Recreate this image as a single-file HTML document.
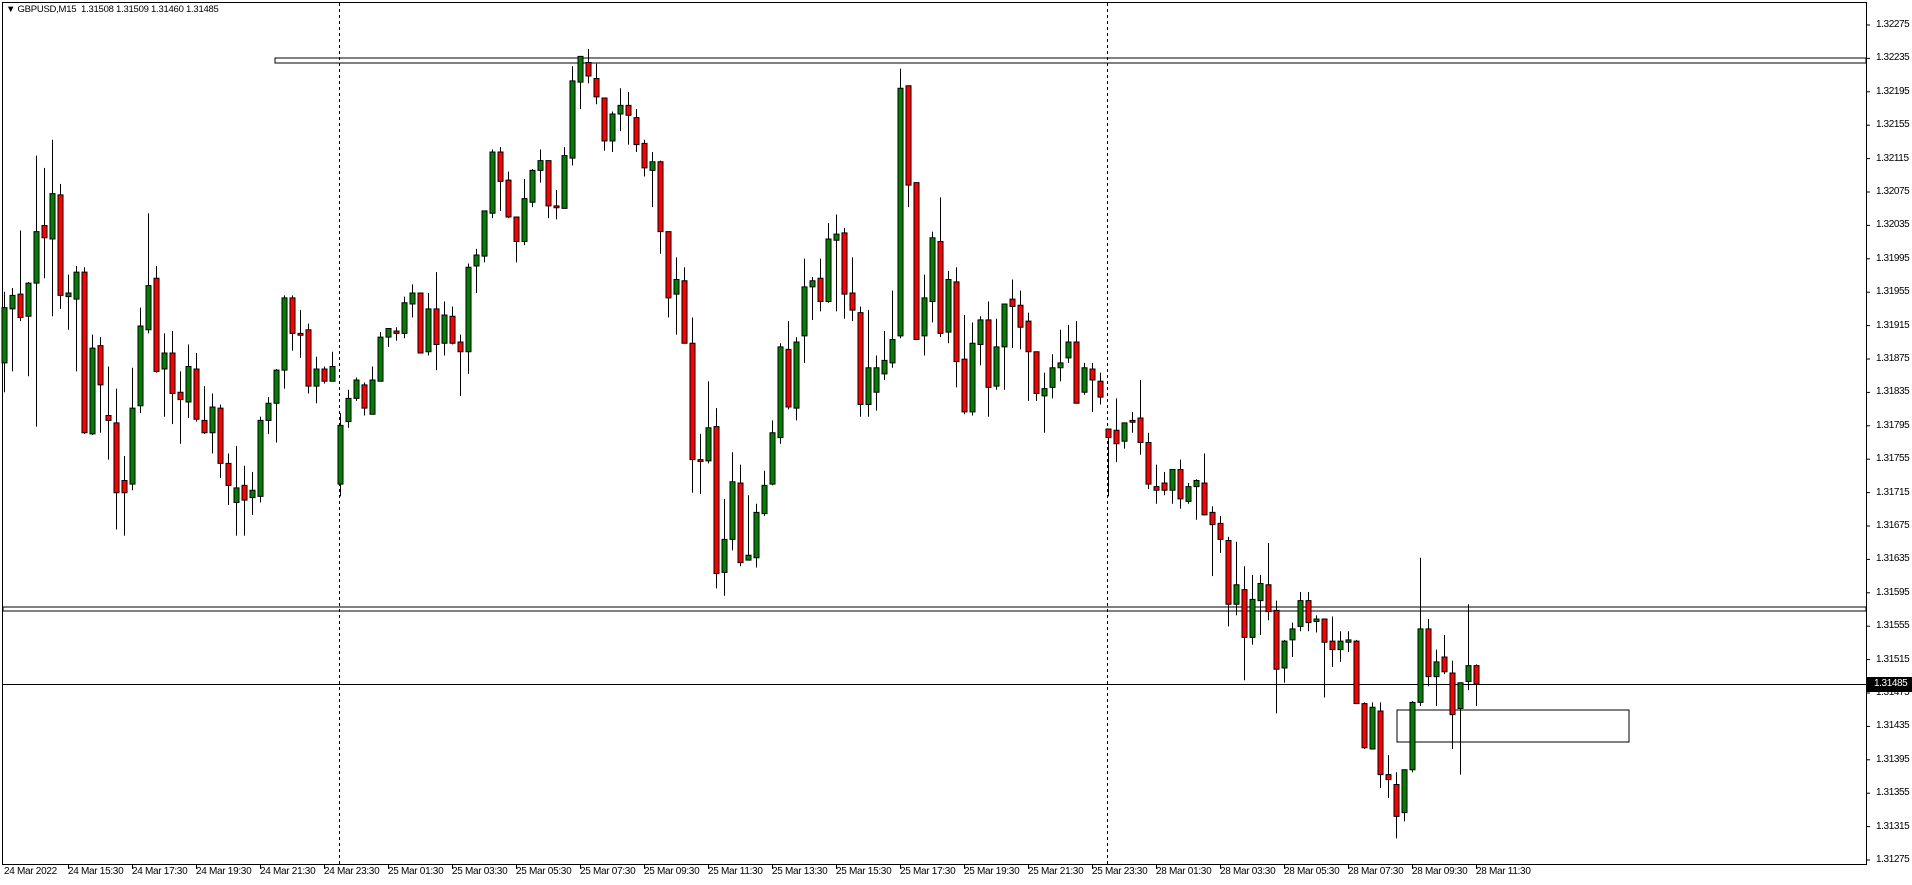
<!DOCTYPE html>
<html><head><meta charset="utf-8"><style>
html,body{margin:0;padding:0;background:#fff;}
body{width:1912px;height:885px;position:relative;overflow:hidden;font-family:"Liberation Sans",sans-serif;color:#000;}
.pl{position:absolute;left:1876px;font-size:10px;letter-spacing:-0.4px;line-height:12px;}
.tl{position:absolute;top:866px;font-size:10px;letter-spacing:-0.3px;line-height:12px;white-space:nowrap;}
#title{position:absolute;left:6px;top:4px;font-size:9.5px;letter-spacing:-0.25px;white-space:pre;}
</style></head><body>
<svg width="1912" height="885" style="position:absolute;left:0;top:0" viewBox="0 0 1912 885">
<rect x="2.5" y="2.5" width="1864" height="862" fill="none" stroke="#000" stroke-width="1"/>
<line x1="339.5" y1="3" x2="339.5" y2="864" stroke="#000" stroke-dasharray="3,3"/>
<line x1="1107.5" y1="3" x2="1107.5" y2="864" stroke="#000" stroke-dasharray="3,3"/>
<rect x="275" y="58" width="1591" height="5" fill="none" stroke="#000" stroke-width="2.2"/>
<rect x="3" y="607" width="1863" height="4" fill="none" stroke="#000" stroke-width="2.2"/>
<line x1="3" y1="684.5" x2="1866" y2="684.5" stroke="#778899" stroke-width="1"/>
<rect x="1397" y="710" width="232" height="32" fill="none" stroke="#000" stroke-width="3"/>
<g stroke="#000" stroke-width="1">
<line x1="1866" x2="1870" y1="25" y2="25"/><line x1="1866" x2="1870" y1="58.4" y2="58.4"/><line x1="1866" x2="1870" y1="91.8" y2="91.8"/><line x1="1866" x2="1870" y1="125.2" y2="125.2"/><line x1="1866" x2="1870" y1="158.6" y2="158.6"/><line x1="1866" x2="1870" y1="192" y2="192"/><line x1="1866" x2="1870" y1="225.4" y2="225.4"/><line x1="1866" x2="1870" y1="258.8" y2="258.8"/><line x1="1866" x2="1870" y1="292.2" y2="292.2"/><line x1="1866" x2="1870" y1="325.6" y2="325.6"/><line x1="1866" x2="1870" y1="359" y2="359"/><line x1="1866" x2="1870" y1="392.4" y2="392.4"/><line x1="1866" x2="1870" y1="425.8" y2="425.8"/><line x1="1866" x2="1870" y1="459.2" y2="459.2"/><line x1="1866" x2="1870" y1="492.6" y2="492.6"/><line x1="1866" x2="1870" y1="526" y2="526"/><line x1="1866" x2="1870" y1="559.4" y2="559.4"/><line x1="1866" x2="1870" y1="592.8" y2="592.8"/><line x1="1866" x2="1870" y1="626.2" y2="626.2"/><line x1="1866" x2="1870" y1="659.6" y2="659.6"/><line x1="1866" x2="1870" y1="693" y2="693"/><line x1="1866" x2="1870" y1="726.4" y2="726.4"/><line x1="1866" x2="1870" y1="759.8" y2="759.8"/><line x1="1866" x2="1870" y1="793.2" y2="793.2"/><line x1="1866" x2="1870" y1="826.6" y2="826.6"/><line x1="1866" x2="1870" y1="860" y2="860"/>
</g>
<g stroke="#000" stroke-width="1">
<line x1="68.5" x2="68.5" y1="864" y2="869"/><line x1="132.5" x2="132.5" y1="864" y2="869"/><line x1="196.5" x2="196.5" y1="864" y2="869"/><line x1="260.5" x2="260.5" y1="864" y2="869"/><line x1="324.5" x2="324.5" y1="864" y2="869"/><line x1="388.5" x2="388.5" y1="864" y2="869"/><line x1="452.5" x2="452.5" y1="864" y2="869"/><line x1="516.5" x2="516.5" y1="864" y2="869"/><line x1="580.5" x2="580.5" y1="864" y2="869"/><line x1="644.5" x2="644.5" y1="864" y2="869"/><line x1="708.5" x2="708.5" y1="864" y2="869"/><line x1="772.5" x2="772.5" y1="864" y2="869"/><line x1="836.5" x2="836.5" y1="864" y2="869"/><line x1="900.5" x2="900.5" y1="864" y2="869"/><line x1="964.5" x2="964.5" y1="864" y2="869"/><line x1="1028.5" x2="1028.5" y1="864" y2="869"/><line x1="1092.5" x2="1092.5" y1="864" y2="869"/><line x1="1156.5" x2="1156.5" y1="864" y2="869"/><line x1="1220.5" x2="1220.5" y1="864" y2="869"/><line x1="1284.5" x2="1284.5" y1="864" y2="869"/><line x1="1348.5" x2="1348.5" y1="864" y2="869"/><line x1="1412.5" x2="1412.5" y1="864" y2="869"/><line x1="1476.5" x2="1476.5" y1="864" y2="869"/>
</g>
</svg>
<svg id="c" width="1912" height="885" style="position:absolute;left:0;top:0" viewBox="0 0 1912 722" preserveAspectRatio="none">
<style>line{stroke:#000;stroke-width:1;vector-effect:non-scaling-stroke}rect{stroke:#000;stroke-width:1;vector-effect:non-scaling-stroke}.g{fill:#008000}.r{fill:#ff0000}</style>
<line x1="4.5" x2="4.5" y1="238" y2="320"/><rect class="g" x="2" width="5" y="251" height="45"/>
<line x1="12.5" x2="12.5" y1="235" y2="303"/><rect class="g" x="10" width="5" y="241" height="11"/>
<line x1="20.5" x2="20.5" y1="188" y2="262"/><rect class="r" x="18" width="5" y="240" height="19"/>
<line x1="28.5" x2="28.5" y1="230" y2="307"/><rect class="g" x="26" width="5" y="231" height="27"/>
<line x1="36.5" x2="36.5" y1="127" y2="348"/><rect class="g" x="34" width="5" y="189" height="42"/>
<line x1="44.5" x2="44.5" y1="137" y2="227"/><rect class="r" x="42" width="5" y="184" height="10"/>
<line x1="52.5" x2="52.5" y1="114" y2="258"/><rect class="g" x="50" width="5" y="158" height="37"/>
<line x1="60.5" x2="60.5" y1="150" y2="252"/><rect class="r" x="58" width="5" y="159" height="82"/>
<line x1="68.5" x2="68.5" y1="224" y2="269"/><rect class="g" x="66" width="5" y="239" height="3"/>
<line x1="76.5" x2="76.5" y1="217" y2="303"/><rect class="g" x="74" width="5" y="222" height="22"/>
<line x1="84.5" x2="84.5" y1="218" y2="354"/><rect class="r" x="82" width="5" y="222" height="131"/>
<line x1="92.5" x2="92.5" y1="273" y2="355"/><rect class="g" x="90" width="5" y="284" height="70"/>
<line x1="100.5" x2="100.5" y1="275" y2="353"/><rect class="r" x="98" width="5" y="282" height="32"/>
<line x1="108.5" x2="108.5" y1="299" y2="375"/><rect class="r" x="106" width="5" y="339" height="4"/>
<line x1="116.5" x2="116.5" y1="317" y2="432"/><rect class="r" x="114" width="5" y="345" height="57"/>
<line x1="124.5" x2="124.5" y1="372" y2="437"/><rect class="r" x="122" width="5" y="392" height="10"/>
<line x1="132.5" x2="132.5" y1="300" y2="400"/><rect class="g" x="130" width="5" y="333" height="62"/>
<line x1="140.5" x2="140.5" y1="251" y2="337"/><rect class="g" x="138" width="5" y="266" height="65"/>
<line x1="148.5" x2="148.5" y1="174" y2="272"/><rect class="g" x="146" width="5" y="233" height="36"/>
<line x1="156.5" x2="156.5" y1="217" y2="304"/><rect class="r" x="154" width="5" y="227" height="76"/>
<line x1="164.5" x2="164.5" y1="272" y2="340"/><rect class="g" x="162" width="5" y="288" height="13"/>
<line x1="172.5" x2="172.5" y1="270" y2="346"/><rect class="r" x="170" width="5" y="288" height="33"/>
<line x1="180.5" x2="180.5" y1="303" y2="362"/><rect class="r" x="178" width="5" y="320" height="6"/>
<line x1="188.5" x2="188.5" y1="281" y2="341"/><rect class="g" x="186" width="5" y="299" height="29"/>
<line x1="196.5" x2="196.5" y1="288" y2="344"/><rect class="r" x="194" width="5" y="301" height="41"/>
<line x1="204.5" x2="204.5" y1="315" y2="354"/><rect class="r" x="202" width="5" y="343" height="10"/>
<line x1="212.5" x2="212.5" y1="321" y2="370"/><rect class="g" x="210" width="5" y="332" height="21"/>
<line x1="220.5" x2="220.5" y1="330" y2="390"/><rect class="r" x="218" width="5" y="333" height="45"/>
<line x1="228.5" x2="228.5" y1="370" y2="412"/><rect class="r" x="226" width="5" y="378" height="18"/>
<line x1="236.5" x2="236.5" y1="364" y2="437"/><rect class="g" x="234" width="5" y="398" height="12"/>
<line x1="244.5" x2="244.5" y1="380" y2="437"/><rect class="r" x="242" width="5" y="396" height="12"/>
<line x1="252.5" x2="252.5" y1="385" y2="420"/><rect class="g" x="250" width="5" y="400" height="6"/>
<line x1="260.5" x2="260.5" y1="340" y2="410"/><rect class="g" x="258" width="5" y="343" height="62"/>
<line x1="268.5" x2="268.5" y1="324" y2="354"/><rect class="g" x="266" width="5" y="329" height="14"/>
<line x1="276.5" x2="276.5" y1="301" y2="361"/><rect class="g" x="274" width="5" y="302" height="27"/>
<line x1="284.5" x2="284.5" y1="241" y2="317"/><rect class="g" x="282" width="5" y="243" height="59"/>
<line x1="292.5" x2="292.5" y1="241" y2="286"/><rect class="r" x="290" width="5" y="243" height="29"/>
<line x1="300.5" x2="300.5" y1="253" y2="292"/><rect class="r" x="298" width="5" y="272" height="1.5"/>
<line x1="308.5" x2="308.5" y1="264" y2="321"/><rect class="r" x="306" width="5" y="269" height="46"/>
<line x1="316.5" x2="316.5" y1="291" y2="329"/><rect class="g" x="314" width="5" y="301" height="14"/>
<line x1="324.5" x2="324.5" y1="299" y2="313"/><rect class="r" x="322" width="5" y="301" height="10"/>
<line x1="332.5" x2="332.5" y1="287" y2="311"/><rect class="g" x="330" width="5" y="299" height="12"/>
<line x1="340.5" x2="340.5" y1="337" y2="405"/><rect class="g" x="338" width="5" y="347" height="48"/>
<line x1="348.5" x2="348.5" y1="318" y2="349"/><rect class="g" x="346" width="5" y="325" height="19"/>
<line x1="356.5" x2="356.5" y1="308" y2="327"/><rect class="g" x="354" width="5" y="310" height="15"/>
<line x1="364.5" x2="364.5" y1="312" y2="339"/><rect class="r" x="362" width="5" y="314" height="19"/>
<line x1="372.5" x2="372.5" y1="299" y2="338"/><rect class="g" x="370" width="5" y="310" height="28"/>
<line x1="380.5" x2="380.5" y1="271" y2="311"/><rect class="g" x="378" width="5" y="275" height="36"/>
<line x1="388.5" x2="388.5" y1="268" y2="283"/><rect class="g" x="386" width="5" y="268" height="7"/>
<line x1="396.5" x2="396.5" y1="267" y2="278"/><rect class="r" x="394" width="5" y="270" height="2"/>
<line x1="404.5" x2="404.5" y1="242" y2="276"/><rect class="g" x="402" width="5" y="247" height="25"/>
<line x1="412.5" x2="412.5" y1="232" y2="259"/><rect class="g" x="410" width="5" y="239" height="9"/>
<line x1="420.5" x2="420.5" y1="239" y2="288"/><rect class="r" x="418" width="5" y="239" height="49"/>
<line x1="428.5" x2="428.5" y1="239" y2="290"/><rect class="g" x="426" width="5" y="252" height="35"/>
<line x1="436.5" x2="436.5" y1="222" y2="302"/><rect class="r" x="434" width="5" y="252" height="29"/>
<line x1="444.5" x2="444.5" y1="246" y2="290"/><rect class="g" x="442" width="5" y="257" height="23"/>
<line x1="452.5" x2="452.5" y1="250" y2="281"/><rect class="r" x="450" width="5" y="258" height="22"/>
<line x1="460.5" x2="460.5" y1="273" y2="323"/><rect class="r" x="458" width="5" y="279" height="8"/>
<line x1="468.5" x2="468.5" y1="215" y2="305"/><rect class="g" x="466" width="5" y="218" height="69"/>
<line x1="476.5" x2="476.5" y1="203" y2="239"/><rect class="g" x="474" width="5" y="208" height="9"/>
<line x1="484.5" x2="484.5" y1="172" y2="214"/><rect class="g" x="482" width="5" y="172" height="37"/>
<line x1="492.5" x2="492.5" y1="122" y2="178"/><rect class="g" x="490" width="5" y="124" height="50"/>
<line x1="500.5" x2="500.5" y1="120" y2="172"/><rect class="r" x="498" width="5" y="124" height="24"/>
<line x1="508.5" x2="508.5" y1="140" y2="178"/><rect class="r" x="506" width="5" y="147" height="30"/>
<line x1="516.5" x2="516.5" y1="177" y2="214"/><rect class="r" x="514" width="5" y="177" height="20"/>
<line x1="524.5" x2="524.5" y1="146" y2="200"/><rect class="g" x="522" width="5" y="162" height="35"/>
<line x1="532.5" x2="532.5" y1="138" y2="169"/><rect class="g" x="530" width="5" y="139" height="26"/>
<line x1="540.5" x2="540.5" y1="122" y2="149"/><rect class="g" x="538" width="5" y="131" height="8"/>
<line x1="548.5" x2="548.5" y1="131" y2="178"/><rect class="r" x="546" width="5" y="131" height="37"/>
<line x1="556.5" x2="556.5" y1="155" y2="179"/><rect class="r" x="554" width="5" y="168" height="1.5"/>
<line x1="564.5" x2="564.5" y1="120" y2="170"/><rect class="g" x="562" width="5" y="127" height="43"/>
<line x1="572.5" x2="572.5" y1="54" y2="135"/><rect class="g" x="570" width="5" y="66" height="63"/>
<line x1="580.5" x2="580.5" y1="46" y2="89"/><rect class="g" x="578" width="5" y="46" height="21"/>
<line x1="588.5" x2="588.5" y1="40" y2="68"/><rect class="r" x="586" width="5" y="51" height="11"/>
<line x1="596.5" x2="596.5" y1="52" y2="85"/><rect class="r" x="594" width="5" y="64" height="15"/>
<line x1="604.5" x2="604.5" y1="80" y2="123"/><rect class="r" x="602" width="5" y="80" height="35"/>
<line x1="612.5" x2="612.5" y1="91" y2="124"/><rect class="g" x="610" width="5" y="93" height="22"/>
<line x1="620.5" x2="620.5" y1="72" y2="107"/><rect class="g" x="618" width="5" y="86" height="7"/>
<line x1="628.5" x2="628.5" y1="75" y2="118"/><rect class="r" x="626" width="5" y="86" height="8"/>
<line x1="636.5" x2="636.5" y1="89" y2="124"/><rect class="r" x="634" width="5" y="96" height="22"/>
<line x1="644.5" x2="644.5" y1="114" y2="144"/><rect class="r" x="642" width="5" y="117" height="20"/>
<line x1="652.5" x2="652.5" y1="124" y2="169"/><rect class="g" x="650" width="5" y="132" height="7"/>
<line x1="660.5" x2="660.5" y1="131" y2="207"/><rect class="r" x="658" width="5" y="132" height="57"/>
<line x1="668.5" x2="668.5" y1="189" y2="259"/><rect class="r" x="666" width="5" y="189" height="54"/>
<line x1="676.5" x2="676.5" y1="210" y2="273"/><rect class="g" x="674" width="5" y="228" height="12"/>
<line x1="684.5" x2="684.5" y1="218" y2="280"/><rect class="r" x="682" width="5" y="229" height="51"/>
<line x1="692.5" x2="692.5" y1="259" y2="402"/><rect class="r" x="690" width="5" y="280" height="95"/>
<line x1="700.5" x2="700.5" y1="354" y2="403"/><rect class="r" x="698" width="5" y="375" height="1.5"/>
<line x1="708.5" x2="708.5" y1="311" y2="378"/><rect class="g" x="706" width="5" y="349" height="27"/>
<line x1="716.5" x2="716.5" y1="333" y2="480"/><rect class="r" x="714" width="5" y="348" height="120"/>
<line x1="724.5" x2="724.5" y1="407" y2="486"/><rect class="g" x="722" width="5" y="440" height="27"/>
<line x1="732.5" x2="732.5" y1="369" y2="449"/><rect class="g" x="730" width="5" y="393" height="47"/>
<line x1="740.5" x2="740.5" y1="379" y2="462"/><rect class="r" x="738" width="5" y="394" height="65"/>
<line x1="748.5" x2="748.5" y1="404" y2="457"/><rect class="g" x="746" width="5" y="453" height="4"/>
<line x1="756.5" x2="756.5" y1="411" y2="463"/><rect class="g" x="754" width="5" y="418" height="37"/>
<line x1="764.5" x2="764.5" y1="384" y2="421"/><rect class="g" x="762" width="5" y="396" height="23"/>
<line x1="772.5" x2="772.5" y1="343" y2="396"/><rect class="g" x="770" width="5" y="353" height="42"/>
<line x1="780.5" x2="780.5" y1="280" y2="362"/><rect class="g" x="778" width="5" y="283" height="74"/>
<line x1="788.5" x2="788.5" y1="262" y2="334"/><rect class="r" x="786" width="5" y="285" height="47"/>
<line x1="796.5" x2="796.5" y1="275" y2="343"/><rect class="g" x="794" width="5" y="279" height="54"/>
<line x1="804.5" x2="804.5" y1="211" y2="296"/><rect class="g" x="802" width="5" y="234" height="40"/>
<line x1="812.5" x2="812.5" y1="226" y2="261"/><rect class="g" x="810" width="5" y="229" height="5"/>
<line x1="820.5" x2="820.5" y1="211" y2="254"/><rect class="r" x="818" width="5" y="227" height="19"/>
<line x1="828.5" x2="828.5" y1="182" y2="247"/><rect class="g" x="826" width="5" y="195" height="51"/>
<line x1="836.5" x2="836.5" y1="175" y2="254"/><rect class="g" x="834" width="5" y="191" height="5"/>
<line x1="844.5" x2="844.5" y1="186" y2="260"/><rect class="r" x="842" width="5" y="190" height="50"/>
<line x1="852.5" x2="852.5" y1="210" y2="262"/><rect class="r" x="850" width="5" y="239" height="14"/>
<line x1="860.5" x2="860.5" y1="250" y2="340"/><rect class="r" x="858" width="5" y="255" height="75"/>
<line x1="868.5" x2="868.5" y1="253" y2="340"/><rect class="g" x="866" width="5" y="300" height="30"/>
<line x1="876.5" x2="876.5" y1="290" y2="335"/><rect class="g" x="874" width="5" y="300" height="20"/>
<line x1="884.5" x2="884.5" y1="270" y2="310"/><rect class="g" x="882" width="5" y="294" height="11"/>
<line x1="892.5" x2="892.5" y1="237" y2="300"/><rect class="g" x="890" width="5" y="277" height="19"/>
<line x1="900.5" x2="900.5" y1="56" y2="276"/><rect class="g" x="898" width="5" y="72" height="202"/>
<line x1="908.5" x2="908.5" y1="70" y2="169"/><rect class="r" x="906" width="5" y="70" height="81"/>
<line x1="916.5" x2="916.5" y1="149" y2="277"/><rect class="r" x="914" width="5" y="149" height="128"/>
<line x1="924.5" x2="924.5" y1="224" y2="290"/><rect class="g" x="922" width="5" y="243" height="31"/>
<line x1="932.5" x2="932.5" y1="189" y2="263"/><rect class="g" x="930" width="5" y="194" height="52"/>
<line x1="940.5" x2="940.5" y1="161" y2="275"/><rect class="r" x="938" width="5" y="197" height="75"/>
<line x1="948.5" x2="948.5" y1="221" y2="280"/><rect class="g" x="946" width="5" y="228" height="43"/>
<line x1="956.5" x2="956.5" y1="218" y2="316"/><rect class="r" x="954" width="5" y="230" height="65"/>
<line x1="964.5" x2="964.5" y1="257" y2="338"/><rect class="r" x="962" width="5" y="293" height="43"/>
<line x1="972.5" x2="972.5" y1="263" y2="339"/><rect class="g" x="970" width="5" y="280" height="56"/>
<line x1="980.5" x2="980.5" y1="258" y2="298"/><rect class="g" x="978" width="5" y="261" height="20"/>
<line x1="988.5" x2="988.5" y1="246" y2="340"/><rect class="r" x="986" width="5" y="261" height="55"/>
<line x1="996.5" x2="996.5" y1="260" y2="318"/><rect class="g" x="994" width="5" y="283" height="32"/>
<line x1="1004.5" x2="1004.5" y1="248" y2="318"/><rect class="g" x="1002" width="5" y="248" height="35"/>
<line x1="1012.5" x2="1012.5" y1="228" y2="284"/><rect class="r" x="1010" width="5" y="244" height="6"/>
<line x1="1020.5" x2="1020.5" y1="237" y2="285"/><rect class="r" x="1018" width="5" y="249" height="18"/>
<line x1="1028.5" x2="1028.5" y1="255" y2="327"/><rect class="r" x="1026" width="5" y="262" height="25"/>
<line x1="1036.5" x2="1036.5" y1="287" y2="327"/><rect class="r" x="1034" width="5" y="287" height="34"/>
<line x1="1044.5" x2="1044.5" y1="304" y2="353"/><rect class="g" x="1042" width="5" y="317" height="6"/>
<line x1="1052.5" x2="1052.5" y1="289" y2="325"/><rect class="g" x="1050" width="5" y="300" height="16"/>
<line x1="1060.5" x2="1060.5" y1="269" y2="311"/><rect class="g" x="1058" width="5" y="296" height="4"/>
<line x1="1068.5" x2="1068.5" y1="265" y2="296"/><rect class="g" x="1066" width="5" y="279" height="13"/>
<line x1="1076.5" x2="1076.5" y1="262" y2="329"/><rect class="r" x="1074" width="5" y="279" height="50"/>
<line x1="1084.5" x2="1084.5" y1="296" y2="322"/><rect class="g" x="1082" width="5" y="300" height="20"/>
<line x1="1092.5" x2="1092.5" y1="296" y2="336"/><rect class="r" x="1090" width="5" y="301" height="9"/>
<line x1="1100.5" x2="1100.5" y1="304" y2="330"/><rect class="r" x="1098" width="5" y="311" height="13"/>
<line x1="1108.5" x2="1108.5" y1="350" y2="405"/><rect class="r" x="1106" width="5" y="350" height="7"/>
<line x1="1116.5" x2="1116.5" y1="325" y2="377"/><rect class="r" x="1114" width="5" y="351" height="11"/>
<line x1="1124.5" x2="1124.5" y1="345" y2="366"/><rect class="g" x="1122" width="5" y="345" height="15"/>
<line x1="1132.5" x2="1132.5" y1="336" y2="353"/><rect class="r" x="1130" width="5" y="343" height="1.5"/>
<line x1="1140.5" x2="1140.5" y1="310" y2="371"/><rect class="r" x="1138" width="5" y="341" height="20"/>
<line x1="1148.5" x2="1148.5" y1="353" y2="399"/><rect class="r" x="1146" width="5" y="361" height="34"/>
<line x1="1156.5" x2="1156.5" y1="379" y2="411"/><rect class="r" x="1154" width="5" y="397" height="3"/>
<line x1="1164.5" x2="1164.5" y1="385" y2="404"/><rect class="r" x="1162" width="5" y="394" height="6"/>
<line x1="1172.5" x2="1172.5" y1="383" y2="411"/><rect class="g" x="1170" width="5" y="383" height="17"/>
<line x1="1180.5" x2="1180.5" y1="375" y2="415"/><rect class="r" x="1178" width="5" y="383" height="24"/>
<line x1="1188.5" x2="1188.5" y1="394" y2="411"/><rect class="g" x="1186" width="5" y="397" height="12"/>
<line x1="1196.5" x2="1196.5" y1="391" y2="424"/><rect class="g" x="1194" width="5" y="392" height="5"/>
<line x1="1204.5" x2="1204.5" y1="370" y2="420"/><rect class="r" x="1202" width="5" y="394" height="26"/>
<line x1="1212.5" x2="1212.5" y1="413" y2="470"/><rect class="r" x="1210" width="5" y="418" height="10"/>
<line x1="1220.5" x2="1220.5" y1="421" y2="451"/><rect class="r" x="1218" width="5" y="427" height="13"/>
<line x1="1228.5" x2="1228.5" y1="438" y2="511"/><rect class="r" x="1226" width="5" y="441" height="52"/>
<line x1="1236.5" x2="1236.5" y1="442" y2="502"/><rect class="g" x="1234" width="5" y="477" height="16"/>
<line x1="1244.5" x2="1244.5" y1="462" y2="555"/><rect class="r" x="1242" width="5" y="481" height="39"/>
<line x1="1252.5" x2="1252.5" y1="469" y2="526"/><rect class="g" x="1250" width="5" y="489" height="31"/>
<line x1="1260.5" x2="1260.5" y1="469" y2="518"/><rect class="g" x="1258" width="5" y="476" height="14"/>
<line x1="1268.5" x2="1268.5" y1="443" y2="506"/><rect class="r" x="1266" width="5" y="477" height="22"/>
<line x1="1276.5" x2="1276.5" y1="490" y2="582"/><rect class="r" x="1274" width="5" y="498" height="48"/>
<line x1="1284.5" x2="1284.5" y1="522" y2="557"/><rect class="g" x="1282" width="5" y="523" height="22"/>
<line x1="1292.5" x2="1292.5" y1="508" y2="536"/><rect class="g" x="1290" width="5" y="513" height="9"/>
<line x1="1300.5" x2="1300.5" y1="483" y2="515"/><rect class="g" x="1298" width="5" y="490" height="21"/>
<line x1="1308.5" x2="1308.5" y1="483" y2="515"/><rect class="r" x="1306" width="5" y="490" height="18"/>
<line x1="1316.5" x2="1316.5" y1="502" y2="516"/><rect class="g" x="1314" width="5" y="505" height="2"/>
<line x1="1324.5" x2="1324.5" y1="505" y2="569"/><rect class="r" x="1322" width="5" y="505" height="19"/>
<line x1="1332.5" x2="1332.5" y1="503" y2="544"/><rect class="r" x="1330" width="5" y="523" height="7"/>
<line x1="1340.5" x2="1340.5" y1="515" y2="540"/><rect class="g" x="1338" width="5" y="523" height="7"/>
<line x1="1348.5" x2="1348.5" y1="515" y2="532"/><rect class="g" x="1346" width="5" y="522" height="2"/>
<line x1="1356.5" x2="1356.5" y1="522" y2="574"/><rect class="r" x="1354" width="5" y="523" height="51"/>
<line x1="1364.5" x2="1364.5" y1="573" y2="611"/><rect class="r" x="1362" width="5" y="574" height="36"/>
<line x1="1372.5" x2="1372.5" y1="573" y2="611"/><rect class="g" x="1370" width="5" y="577" height="34"/>
<line x1="1380.5" x2="1380.5" y1="573" y2="643"/><rect class="r" x="1378" width="5" y="580" height="52"/>
<line x1="1388.5" x2="1388.5" y1="616" y2="651"/><rect class="r" x="1386" width="5" y="632" height="4"/>
<line x1="1396.5" x2="1396.5" y1="630" y2="684"/><rect class="r" x="1394" width="5" y="640" height="26"/>
<line x1="1404.5" x2="1404.5" y1="628" y2="670"/><rect class="g" x="1402" width="5" y="628" height="35"/>
<line x1="1412.5" x2="1412.5" y1="572" y2="630"/><rect class="g" x="1410" width="5" y="573" height="55"/>
<line x1="1420.5" x2="1420.5" y1="455" y2="576"/><rect class="g" x="1418" width="5" y="513" height="60"/>
<line x1="1428.5" x2="1428.5" y1="505" y2="560"/><rect class="r" x="1426" width="5" y="513" height="39"/>
<line x1="1436.5" x2="1436.5" y1="530" y2="576"/><rect class="g" x="1434" width="5" y="540" height="12"/>
<line x1="1444.5" x2="1444.5" y1="518" y2="550"/><rect class="r" x="1442" width="5" y="536" height="12"/>
<line x1="1452.5" x2="1452.5" y1="539" y2="611"/><rect class="r" x="1450" width="5" y="549" height="34"/>
<line x1="1460.5" x2="1460.5" y1="557" y2="632"/><rect class="g" x="1458" width="5" y="557" height="21"/>
<line x1="1468.5" x2="1468.5" y1="493" y2="563"/><rect class="g" x="1466" width="5" y="543" height="13"/>
<line x1="1476.5" x2="1476.5" y1="542" y2="576"/><rect class="r" x="1474" width="5" y="543" height="15"/>
</svg>
<div id="title">▼ GBPUSD,M15  1.31508 1.31509 1.31460 1.31485</div>
<div class="pl" style="top:19px">1.32275</div>
<div class="pl" style="top:52px">1.32235</div>
<div class="pl" style="top:86px">1.32195</div>
<div class="pl" style="top:119px">1.32155</div>
<div class="pl" style="top:153px">1.32115</div>
<div class="pl" style="top:186px">1.32075</div>
<div class="pl" style="top:219px">1.32035</div>
<div class="pl" style="top:253px">1.31995</div>
<div class="pl" style="top:286px">1.31955</div>
<div class="pl" style="top:320px">1.31915</div>
<div class="pl" style="top:353px">1.31875</div>
<div class="pl" style="top:386px">1.31835</div>
<div class="pl" style="top:420px">1.31795</div>
<div class="pl" style="top:453px">1.31755</div>
<div class="pl" style="top:487px">1.31715</div>
<div class="pl" style="top:520px">1.31675</div>
<div class="pl" style="top:553px">1.31635</div>
<div class="pl" style="top:587px">1.31595</div>
<div class="pl" style="top:620px">1.31555</div>
<div class="pl" style="top:654px">1.31515</div>
<div class="pl" style="top:687px">1.31475</div>
<div class="pl" style="top:720px">1.31435</div>
<div class="pl" style="top:754px">1.31395</div>
<div class="pl" style="top:787px">1.31355</div>
<div class="pl" style="top:821px">1.31315</div>
<div class="pl" style="top:854px">1.31275</div>
<div style="position:absolute;left:1867px;top:677px;width:45px;height:15px;background:#000;"></div>
<div class="pl" style="top:678px;left:1874px;color:#fff;">1.31485</div>
<div class="tl" style="left:4px">24 Mar 2022</div>
<div class="tl" style="left:68px">24 Mar 15:30</div>
<div class="tl" style="left:132px">24 Mar 17:30</div>
<div class="tl" style="left:196px">24 Mar 19:30</div>
<div class="tl" style="left:260px">24 Mar 21:30</div>
<div class="tl" style="left:324px">24 Mar 23:30</div>
<div class="tl" style="left:388px">25 Mar 01:30</div>
<div class="tl" style="left:452px">25 Mar 03:30</div>
<div class="tl" style="left:516px">25 Mar 05:30</div>
<div class="tl" style="left:580px">25 Mar 07:30</div>
<div class="tl" style="left:644px">25 Mar 09:30</div>
<div class="tl" style="left:708px">25 Mar 11:30</div>
<div class="tl" style="left:772px">25 Mar 13:30</div>
<div class="tl" style="left:836px">25 Mar 15:30</div>
<div class="tl" style="left:900px">25 Mar 17:30</div>
<div class="tl" style="left:964px">25 Mar 19:30</div>
<div class="tl" style="left:1028px">25 Mar 21:30</div>
<div class="tl" style="left:1092px">25 Mar 23:30</div>
<div class="tl" style="left:1156px">28 Mar 01:30</div>
<div class="tl" style="left:1220px">28 Mar 03:30</div>
<div class="tl" style="left:1284px">28 Mar 05:30</div>
<div class="tl" style="left:1348px">28 Mar 07:30</div>
<div class="tl" style="left:1412px">28 Mar 09:30</div>
<div class="tl" style="left:1476px">28 Mar 11:30</div>
</body></html>
